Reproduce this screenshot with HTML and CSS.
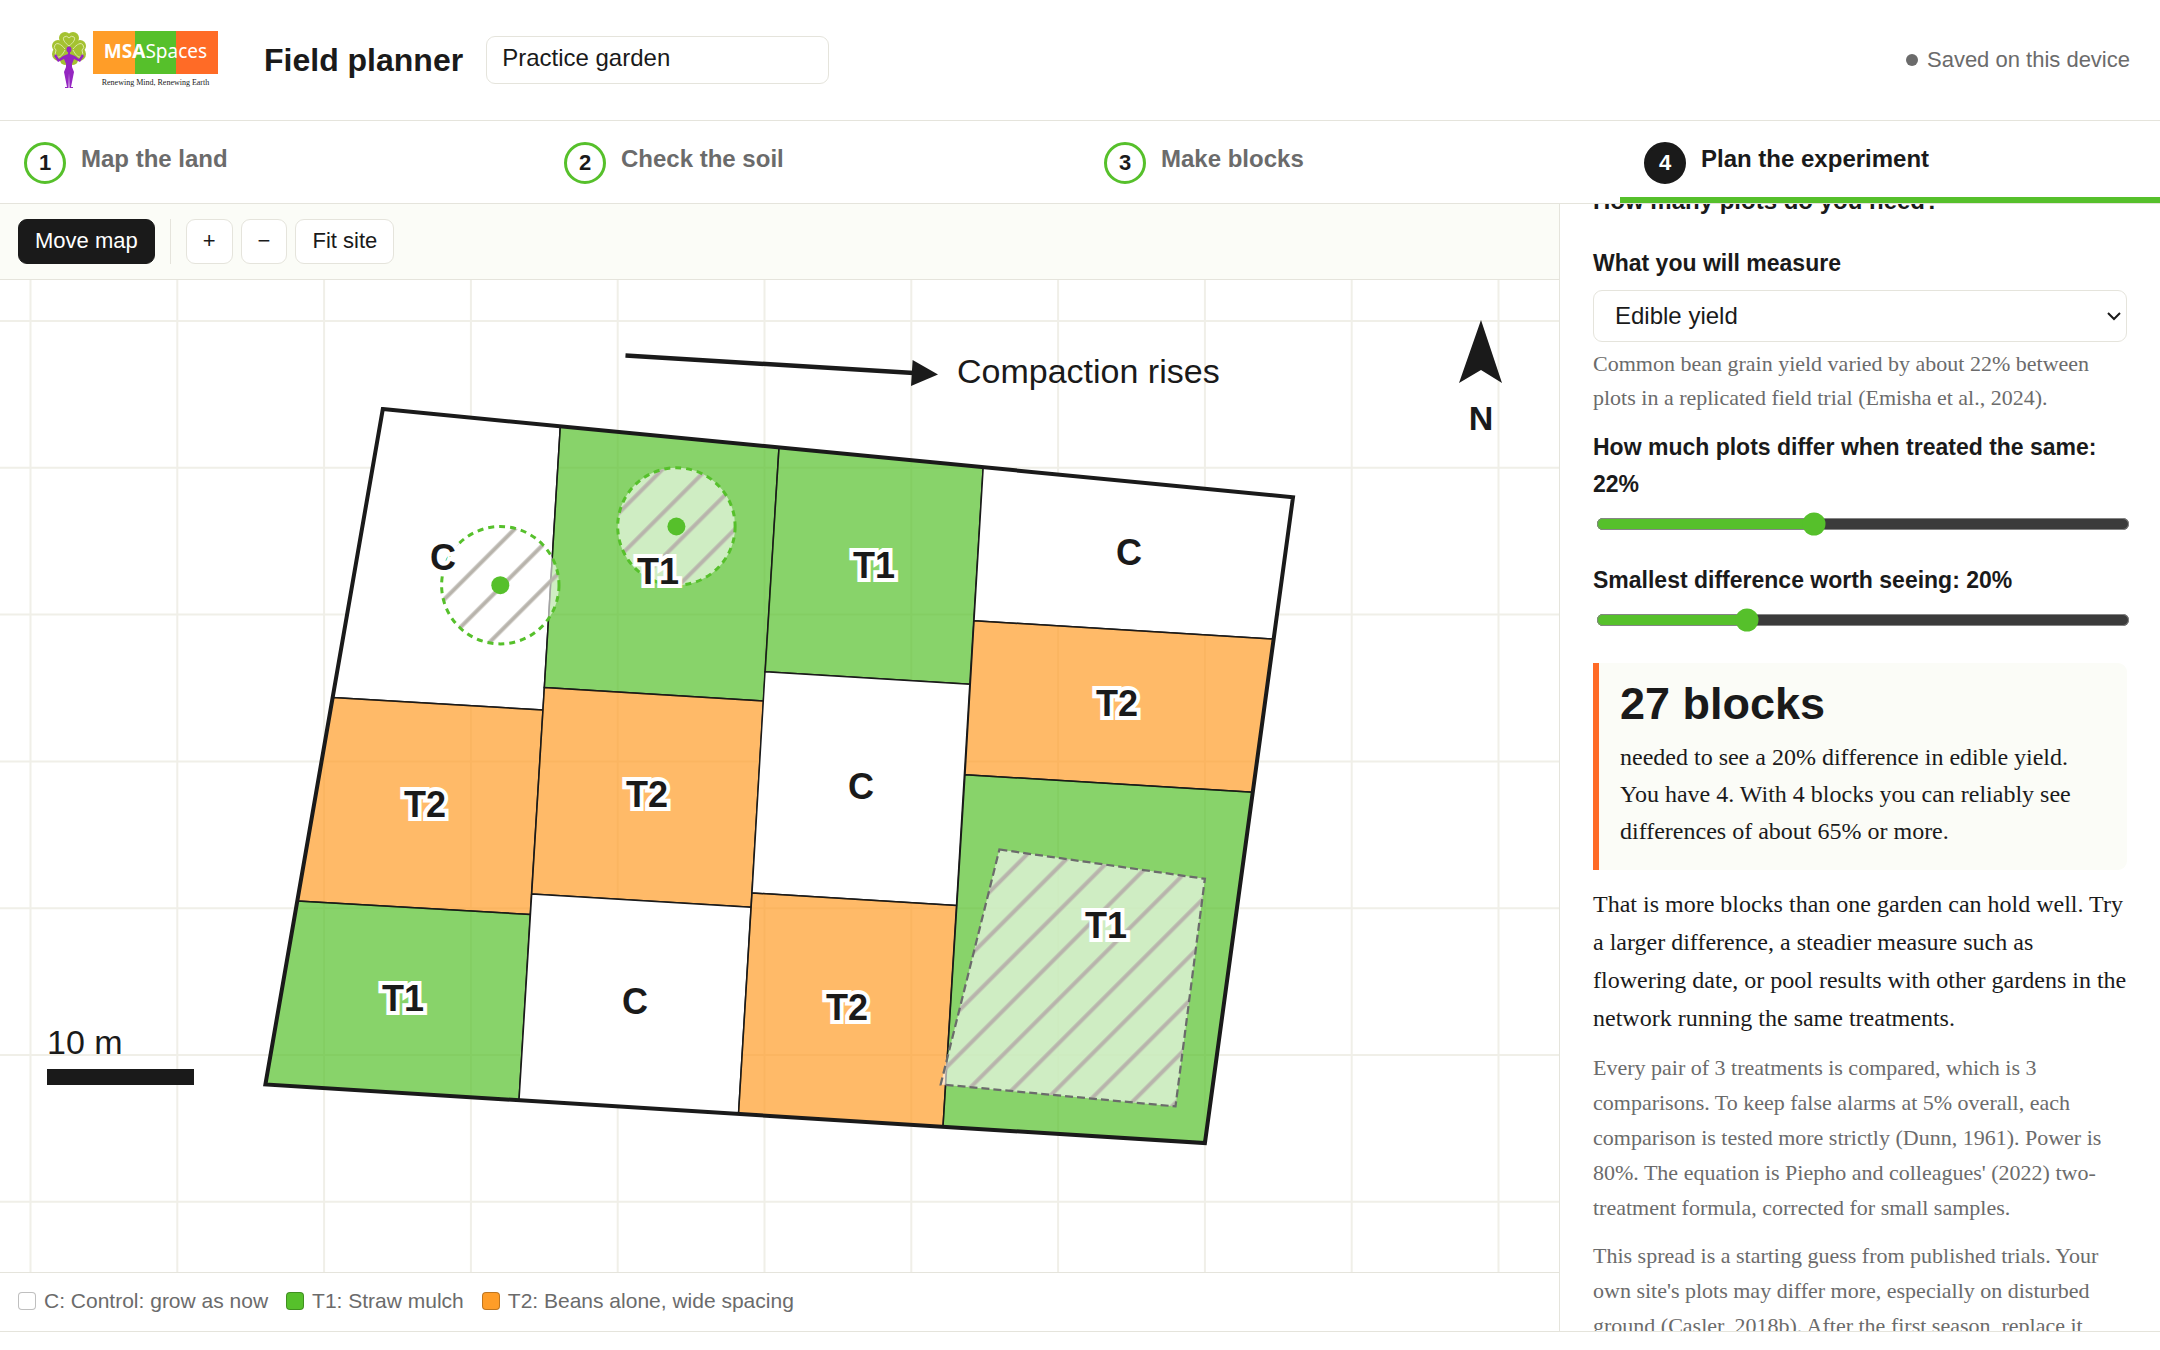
FILE: index.html
```html
<!DOCTYPE html>
<html lang="en">
<head>
<meta charset="utf-8">
<meta name="viewport" content="width=device-width, initial-scale=1">
<title>Field planner</title>
<link rel="stylesheet" href="styles.css">
</head>
<body>
<header class="topbar">
  <a class="logo" href="#" aria-label="MSASpaces home">
    <svg class="logo-figure" viewBox="0 0 36 58" aria-hidden="true">
      <g class="clover">
        <circle cx="14" cy="7" r="6"/>
        <circle cx="22" cy="7" r="6"/>
        <circle cx="7" cy="15" r="6"/>
        <circle cx="29" cy="15" r="6"/>
        <circle cx="8" cy="23" r="7"/>
        <circle cx="28" cy="23" r="7"/>
        <circle cx="14" cy="29" r="5"/>
        <circle cx="22" cy="29" r="5"/>
        <path d="M10 10H26V30H10Z"/>
      </g>
      <path class="veins" d="M18 15C14 12 11 8 13 6Q16 4 18 7Q20 4 23 6C25 8 22 12 18 15M14 18C10 13 6 11 4 14Q2 17 5 19Q3 23 6 26C9 27 12 23 14 19M22 18C26 13 30 11 32 14Q34 17 31 19Q33 23 30 26C27 27 24 23 22 19"/>
      <ellipse class="person" cx="18" cy="18.500" rx="2.500" ry="3"/>
      <path class="person" d="M17 21H19V23L24 25L28 28L31 23L33 25L29 31L23 28L21 33V36L23 41L20 56H22V57H18.500L18 42L17.500 57H14V56H16L13 41L15 36V33L13 28L7 31L3 25L5 23L8 28L12 25L17 23Z"/>
    </svg>
    <span class="logo-words">
      <span class="logo-name"><b>MSA</b>Spaces</span>
      <span class="logo-tag">Renewing Mind, Renewing Earth</span>
    </span>
  </a>
  <h1 class="title">Field planner</h1>
  <input class="garden-name" type="text" value="Practice garden" aria-label="Garden name">
  <p class="saved"><span class="saved-dot"></span>Saved on this device</p>
</header>

<nav class="steps" aria-label="Steps">
  <button class="step" type="button"><span class="step-num">1</span><span class="step-label">Map the land</span></button>
  <button class="step" type="button"><span class="step-num">2</span><span class="step-label">Check the soil</span></button>
  <button class="step" type="button"><span class="step-num">3</span><span class="step-label">Make blocks</span></button>
  <button class="step is-current" type="button" aria-current="step"><span class="step-num">4</span><span class="step-label">Plan the experiment</span></button>
</nav>

<main class="workspace">
  <section class="map-column">
    <div class="toolbar">
      <button class="tool is-active" type="button">Move map</button>
      <span class="divider"></span>
      <button class="tool" type="button" aria-label="Zoom in">+</button>
      <button class="tool" type="button" aria-label="Zoom out">−</button>
      <button class="tool" type="button">Fit site</button>
    </div>
    <div class="map-canvas">
      <svg class="map" viewBox="0 280 1559 992" role="img" aria-label="Site map with blocks and plots">
        <defs>
          <pattern id="hatch" width="31.18" height="31.18" patternUnits="userSpaceOnUse" patternTransform="rotate(45)">
            <path class="hatch-line" d="M20.86 0V31.18"/>
          </pattern>
        </defs>
        <path class="grid" d="M30.5 280V1272M177.3 280V1272M324.1 280V1272M470.9 280V1272M617.7 280V1272M764.5 280V1272M911.3 280V1272M1058.1 280V1272M1204.9 280V1272M1351.7 280V1272M1498.5 280V1272M0 321H1559M0 467.8H1559M0 614.6H1559M0 761.4H1559M0 908.2H1559M0 1055H1559M0 1201.8H1559"/>
        <g class="plots">
          <path class="plot-c" d="M382.8 409.1L560.3 426.3L543 710L332.6 697.5Z"/>
          <path class="plot-t2" d="M332.6 697.5L543 710L530.2 914.5L297.3 901Z"/>
          <path class="plot-t1" d="M297.3 901L530.2 914.5L519 1100.2L265.4 1084.4Z"/>
          <path class="plot-t1" d="M560.3 426.3L779 447.4L763.5 700.9L544.3 687.5Z"/>
          <path class="plot-t2" d="M544.3 687.5L763.5 700.9L751 907.2L531.7 894Z"/>
          <path class="plot-c" d="M531.7 894L751 907.2L738.5 1114L519 1100.2Z"/>
          <path class="plot-t1" d="M779 447.4L983.2 467.2L969.8 684.3L765 671.8Z"/>
          <path class="plot-c" d="M765 671.8L969.8 684.3L956.5 905.5L752 893Z"/>
          <path class="plot-t2" d="M752 893L956.5 905.5L943 1126.8L738.5 1114Z"/>
          <path class="plot-c" d="M983.2 467.2L1293 497.2L1273.7 639L974 620.7Z"/>
          <path class="plot-t2" d="M974 620.7L1273.7 639L1252.7 792.3L965 774.7Z"/>
          <path class="plot-t1" d="M965 774.7L1252.7 792.3L1204.9 1143.1L943 1126.8Z"/>
        </g>
        <path class="site" d="M382.8 409.1L1293 497.2L1204.9 1143.1L265.4 1084.4Z"/>
        <path class="shade" d="M999.4 849.5L1204.9 878.8L1175.5 1106.4L940.7 1084.4Z"/>
        <path class="excluded" d="M999.4 849.5L1204.9 878.8L1175.5 1106.4L940.7 1084.4Z"/>
        <circle class="shade" cx="500.3" cy="585.2" r="58.7"/>
        <circle class="tree" cx="500.3" cy="585.2" r="58.7"/>
        <circle class="trunk" cx="500.3" cy="585.2" r="9"/>
        <circle class="shade" cx="676.4" cy="526.5" r="58.7"/>
        <circle class="tree" cx="676.4" cy="526.5" r="58.7"/>
        <circle class="trunk" cx="676.4" cy="526.5" r="9"/>
        <g class="plot-labels">
          <text x="443" y="570">C</text>
          <text x="425" y="817">T2</text>
          <text x="403" y="1011">T1</text>
          <text x="658" y="584">T1</text>
          <text x="647" y="807">T2</text>
          <text x="635" y="1014">C</text>
          <text x="874" y="578">T1</text>
          <text x="861" y="799">C</text>
          <text x="847" y="1020">T2</text>
          <text x="1129" y="565">C</text>
          <text x="1117" y="716">T2</text>
          <text x="1106" y="938">T1</text>
        </g>
        <path class="gradient-line" d="M625.5 355.5L914 373"/>
        <path class="ink" d="M938 374.5L912.6 360L911 386Z"/>
        <text class="map-note" x="957" y="383">Compaction rises</text>
        <path class="ink" d="M1481 320L1502 383L1481 370L1459 383Z"/>
        <text class="north" x="1481" y="430">N</text>
        <text class="map-note" x="47" y="1054">10 m</text>
        <rect class="ink" x="47" y="1069" width="147" height="16"/>
      </svg>
    </div>
    <ul class="legend">
      <li><span class="swatch swatch-c"></span>C: Control: grow as now</li>
      <li><span class="swatch swatch-t1"></span>T1: Straw mulch</li>
      <li><span class="swatch swatch-t2"></span>T2: Beans alone, wide spacing</li>
    </ul>
  </section>

  <aside class="panel" id="panel">
    <h2 class="panel-title">How many plots do you need?</h2>
    <label class="field-label" for="measure">What you will measure</label>
    <select class="measure" id="measure"><option>Edible yield</option></select>
    <p class="hint">Common bean grain yield varied by about 22% between plots in a replicated field trial (Emisha et al., 2024).</p>
    <label class="field-label" for="spread">How much plots differ when treated the same: 22%</label>
    <input class="slider" id="spread" type="range" min="5" max="47" value="22">
    <label class="field-label" for="difference">Smallest difference worth seeing: 20%</label>
    <input class="slider" id="difference" type="range" min="5" max="60" value="20">
    <div class="result">
      <strong class="result-number">27 blocks</strong>
      <p class="result-text">needed to see a 20% difference in edible yield. You have 4. With 4 blocks you can reliably see differences of about 65% or more.</p>
    </div>
    <p class="advice">That is more blocks than one garden can hold well. Try a larger difference, a steadier measure such as flowering date, or pool results with other gardens in the network running the same treatments.</p>
    <p class="note">Every pair of 3 treatments is compared, which is 3 comparisons. To keep false alarms at 5% overall, each comparison is tested more strictly (Dunn, 1961). Power is 80%. The equation is Piepho and colleagues' (2022) two-treatment formula, corrected for small samples.</p>
    <p class="note">This spread is a starting guess from published trials. Your own site's plots may differ more, especially on disturbed ground (Casler, 2018b). After the first season, replace it</p>
  </aside>
</main>
<script src="panel.js"></script>
</body>
</html>
```
FILE: styles.css
```css
:root {
  --ink: #1a1a1a;
  --muted: #6b6b6b;
  --line: #e5e4dc;
  --paper: #fbfcf7;
  --green: #56c02b;
  --orange: #ff9d28;
  --red: #ff6b26;
  --sans: "Liberation Sans", Arial, sans-serif;
  --serif: "Liberation Serif", "Times New Roman", serif;
}

* { box-sizing: border-box; }

body {
  margin: 0;
  height: 100vh;
  padding-bottom: 18px;
  display: flex;
  flex-direction: column;
  overflow: hidden;
  background: #fff;
  color: var(--ink);
  font-family: var(--sans);
}

h1, h2, p, ul { margin: 0; padding: 0; }

/* Header */
.topbar {
  display: flex;
  align-items: center;
  height: 121px;
  flex: none;
  padding: 0 30px 0 51px;
  border-bottom: 1px solid var(--line);
}

.logo {
  display: flex;
  align-items: flex-start;
  gap: 6px;
  padding-top: 2px;
  color: var(--ink);
  text-decoration: none;
}

.logo-figure { width: 36px; height: 58px; }
.clover { fill: #a4c231; }
.veins { fill: none; stroke: #dde8a6; stroke-width: 1; }
.person { fill: #9526c1; }
.logo-words { display: flex; flex-direction: column; align-items: center; }

.logo-name {
  width: 125px;
  height: 43px;
  background: linear-gradient(90deg, var(--orange) 42px, var(--green) 42px 83px, var(--red) 83px);
  color: #fff;
  font: 19px/40px "Noto Sans", sans-serif;
  text-align: center;
}

.logo-tag { font: 8px/18px var(--serif); white-space: nowrap; }

.title { margin-left: 46px; font-size: 32px; line-height: 40px; }

.garden-name {
  width: 343px;
  height: 48px;
  margin-left: 23px;
  padding: 0 15px 4px;
  border: 1px solid var(--line);
  border-radius: 9px;
  color: var(--ink);
  font: 24px var(--sans);
}

.saved {
  display: flex;
  align-items: center;
  gap: 9px;
  margin-left: auto;
  color: var(--muted);
  font-size: 22px;
}

.saved-dot { width: 12px; height: 12px; border-radius: 50%; background: var(--muted); }

/* Steps */
.steps {
  display: grid;
  grid-template-columns: repeat(4, 1fr);
  flex: none;
  height: 83px;
  border-bottom: 1px solid var(--line);
}

.step {
  display: flex;
  align-items: flex-start;
  gap: 15px;
  padding: 21px 24px 0;
  border: 0;
  border-bottom: 6px solid transparent;
  background: none;
  color: var(--muted);
  font: bold 24px/34px var(--sans);
}

.step.is-current { border-bottom-color: var(--green); color: var(--ink); }

.step-num {
  width: 42px;
  height: 42px;
  border: 3px solid var(--green);
  border-radius: 50%;
  color: var(--ink);
  font-size: 22px;
  line-height: 35px;
  text-align: center;
}

.is-current .step-num { border-color: var(--ink); background: var(--ink); color: #fff; }

/* Workspace */
.workspace {
  display: grid;
  grid-template-columns: minmax(0, 1fr) 600px;
  flex: 1;
  min-height: 0;
  border-bottom: 1px solid var(--line);
}

.map-column {
  display: flex;
  flex-direction: column;
  min-height: 0;
  border-right: 1px solid var(--line);
}

.toolbar {
  display: flex;
  gap: 8px;
  padding: 15px 18px;
  border-bottom: 1px solid var(--line);
  background: var(--paper);
}

.tool {
  height: 45px;
  padding: 0 16px 2px;
  border: 1px solid var(--line);
  border-radius: 9px;
  background: #fff;
  color: var(--ink);
  font: 22px var(--sans);
}

.tool.is-active { border-color: var(--ink); background: var(--ink); color: #fff; }
.divider { width: 1px; margin: 0 7px; background: var(--line); }

.map-canvas { flex: 1; min-height: 0; }
.map { display: block; width: 100%; height: 100%; }
.grid { fill: none; stroke: #f0efe8; stroke-width: 2; }
.plots { stroke: var(--ink); stroke-width: 1.5; }
.plot-c { fill: #fff; }
.plot-t1 { fill: var(--green); fill-opacity: 0.7; }
.plot-t2 { fill: var(--orange); fill-opacity: 0.7; }
.site { fill: none; stroke: var(--ink); stroke-width: 4; }
.shade { fill: #fff; fill-opacity: 0.6; }
.hatch-line { stroke: #b8b4ac; stroke-width: 4; }
.excluded { fill: url(#hatch); stroke: var(--muted); stroke-width: 2.25; stroke-dasharray: 8 4; }
.tree { fill: url(#hatch); stroke: var(--green); stroke-width: 3; stroke-dasharray: 6 5; }
.trunk { fill: var(--green); }

.plot-labels {
  fill: var(--ink);
  stroke: #fff;
  stroke-width: 8px;
  paint-order: stroke;
  font: bold 36px var(--sans);
  text-anchor: middle;
}

.gradient-line { stroke: var(--ink); stroke-width: 4.5; }
.ink { fill: var(--ink); }
.map-note { fill: var(--ink); font: 34px var(--sans); }
.north { fill: var(--ink); font: bold 34px var(--sans); text-anchor: middle; }

.legend {
  display: flex;
  align-items: center;
  gap: 18px;
  height: 59px;
  flex: none;
  padding: 0 18px 3px;
  border-top: 1px solid var(--line);
  color: var(--muted);
  font-size: 21px;
  list-style: none;
}

.legend li { display: flex; align-items: center; gap: 8px; }
.swatch { width: 18px; height: 18px; border: 1px solid rgb(0 0 0 / 25%); border-radius: 4px; }
.swatch-c { background: #fff; }
.swatch-t1 { background: var(--green); }
.swatch-t2 { background: var(--orange); }

/* Side panel */
.panel {
  min-height: 0;
  padding: 33px;
  overflow-y: auto;
  scrollbar-width: none;
}

.panel-title { font-size: 24px; line-height: 36px; }
.field-label { display: block; margin-top: 26px; font-size: 23px; line-height: 37px; font-weight: bold; }

/* Native controls are drawn one and a half times their stock size */
.measure {
  display: block;
  zoom: 1.5;
  width: 100%;
  height: 35px;
  margin-top: 5px;
  padding: 0 0 1px 10px;
  border: 1px solid var(--line);
  border-radius: 6px;
  background: #fff;
  color: var(--ink);
  font: 16px var(--sans);
}

.slider {
  display: block;
  zoom: 1.5;
  width: 100%;
  margin: 6px 2px 0;
  accent-color: var(--green);
}

.hint { margin-top: 5px; color: var(--muted); font: 22px/34px var(--serif); }
.hint + .field-label { margin-top: 14px; }

.result {
  margin-top: 31px;
  padding: 14px 21px 20px;
  border-left: 6px solid var(--red);
  border-radius: 0 9px 9px 0;
  background: var(--paper);
}

.result-number { display: block; font-size: 45px; line-height: 54px; }
.result-text { margin-top: 8px; font: 24px/37px var(--serif); }
.advice { margin-top: 15px; font: 24px/38px var(--serif); }
.note { margin-top: 13px; color: var(--muted); font: 22px/35px var(--serif); }
```
FILE: panel.js
```js
document.getElementById("panel").scrollTop = 54;
```
